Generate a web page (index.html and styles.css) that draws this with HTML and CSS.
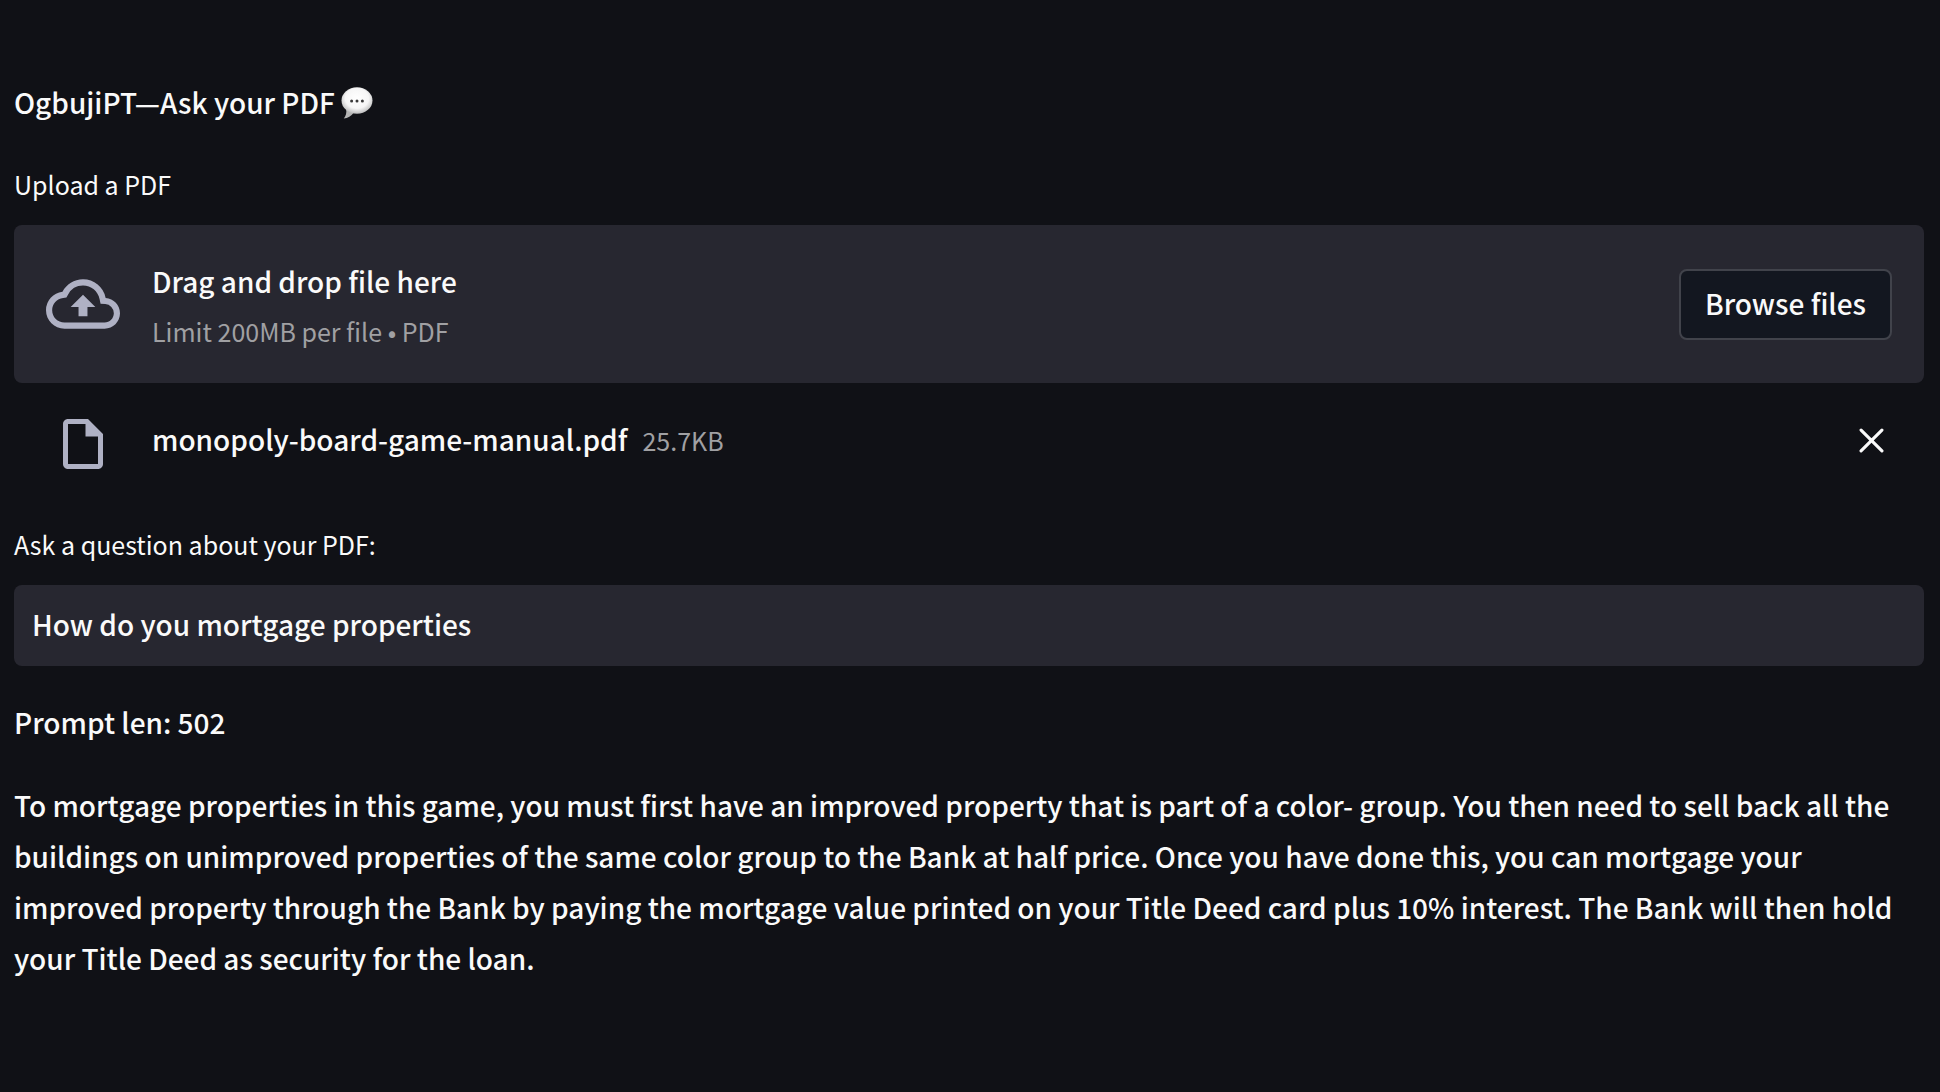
FILE: index.html
```html
<!DOCTYPE html>
<html lang="en">
<head>
    <meta charset="UTF-8">
    <meta name="viewport" content="width=device-width, initial-scale=1.0">
    <title>Ask your PDF</title>
    <link rel="stylesheet" href="styles.css">
</head>
<body>

<main class="page">
    <!-- Page title -->
    <p class="title">OgbujiPT—Ask your PDF
        <svg class="bubble" viewBox="0 0 32 32" role="img" aria-label="Speech bubble">
            <defs>
                <radialGradient id="shine" cx="50%" cy="42%" r="58%">
                    <stop offset="0" stop-color="#ffffff"/>
                    <stop offset="0.65" stop-color="#f6f6f6"/>
                    <stop offset="1" stop-color="#bdbdbd"/>
                </radialGradient>
            </defs>
            <path fill="#b4b4b4" d="M5 22c1 4-.2 7-2.2 9.4 4-.2 7.600-2.400 9.700-5.400z"/>
            <ellipse cx="16" cy="13.500" rx="15.500" ry="13.200" fill="url(#shine)"/>
            <circle cx="10.600" cy="14" r="1.500" fill="#3a3a3a"/>
            <circle cx="16" cy="14" r="1.500" fill="#3a3a3a"/>
            <circle cx="21.400" cy="14" r="1.500" fill="#3a3a3a"/>
        </svg>
    </p>

    <!-- File uploader -->
    <section class="uploader">
        <span class="label" id="upload-label">Upload a PDF</span>
        <div class="dropzone">
            <svg class="cloud-icon" viewBox="0 0 24 24" aria-hidden="true">
                <path d="M19.350 10.040A7.490 7.490 0 0012 4C9.110 4 6.600 5.640 5.350 8.040A5.994 5.994 0 000 14c0 3.310 2.690 6 6 6h13c2.760 0 5-2.240 5-5 0-2.640-2.050-4.780-4.650-4.960zM19 18H6c-2.210 0-4-1.790-4-4 0-2.050 1.530-3.760 3.560-3.970l1.070-.110.500-.950A5.469 5.469 0 0112 6c2.620 0 4.880 1.860 5.390 4.430l.300 1.500 1.530.110A2.980 2.980 0 0122 15c0 1.650-1.350 3-3 3zM8 13h2.550v3h2.900v-3H16l-4-4z"/>
            </svg>
            <div class="drop-text">
                <span>Drag and drop file here</span>
                <small>Limit 200MB per file • PDF</small>
            </div>
            <button type="button" class="browse-btn" aria-describedby="upload-label">Browse files</button>
        </div>

        <div class="file-row">
            <div class="file-icon">
                <svg viewBox="0 0 24 24" aria-hidden="true">
                    <path d="M14 2H6c-1.100 0-1.990.900-1.990 2L4 20c0 1.100.890 2 1.990 2H18c1.100 0 2-.900 2-2V8l-6-6zM6 20V4h7v5h5v11H6z"/>
                </svg>
            </div>
            <div class="file-info">
                <span>monopoly-board-game-manual.pdf</span>
                <small>25.7KB</small>
            </div>
            <button type="button" class="remove-btn" aria-label="Remove file">
                <svg viewBox="0 0 24 24" aria-hidden="true">
                    <path d="M2 2l20 20M22 2L2 22"/>
                </svg>
            </button>
        </div>
    </section>

    <!-- Question -->
    <form class="question">
        <label class="label" for="question">Ask a question about your PDF:</label>
        <input type="text" id="question" value="How do you mortgage properties">
    </form>

    <!-- Answer -->
    <p>Prompt len: 502</p>
    <p>To mortgage properties in this game, you must first have an improved property that is part of a color- group. You then need to sell back all the buildings on unimproved properties of the same color group to the Bank at half price. Once you have done this, you can mortgage your improved property through the Bank by paying the mortgage value printed on your Title Deed card plus 10% interest. The Bank will then hold your Title Deed as security for the loan.</p>
</main>

</body>
</html>
```
FILE: styles.css
```css
* {
    box-sizing: border-box;
}

body {
    margin: 0;
    background-color: #101116;
    color: #fafafa;
    font-family: "Source Sans Pro", "Noto Sans CJK JP", sans-serif;
    font-size: 28px;
    font-weight: 500;
    line-height: 51px;
}

button, input {
    font: inherit;
    color: inherit;
}

.page {
    padding: 77px 16px 80px 14px;
}

p {
    margin: 0 0 32px;
}

.title {
    display: flex;
    align-items: center;
    gap: 6px;
    margin-bottom: 34px;
}

.bubble {
    width: 32px;
    height: 32px;
}

.label {
    display: block;
    margin-bottom: 19px;
    font-size: 25px;
    font-weight: 400;
    line-height: 44px;
}

small {
    font-size: 25px;
    font-weight: 400;
    line-height: 44px;
    color: #a0a0a3;
}

/* Uploader */
.dropzone {
    display: flex;
    align-items: center;
    min-height: 158px;
    padding: 16px 32px;
    background-color: #272730;
    border-radius: 8px;
}

.cloud-icon {
    width: 74px;
    height: 74px;
    margin-right: 32px;
    fill: #afb1c4;
}

.drop-text {
    display: flex;
    flex-direction: column;
    gap: 2px;
}

.browse-btn {
    margin-left: auto;
    height: 71px;
    padding: 0 24px 2px;
    background-color: #131720;
    border: 2px solid #41434b;
    border-radius: 8px;
    cursor: pointer;
}

.file-row {
    display: flex;
    align-items: flex-start;
    margin-top: 31px;
    padding: 0 40px 0 32px;
}

.file-icon {
    display: flex;
    justify-content: center;
    width: 74px;
    margin-right: 32px;
}

.file-icon svg {
    width: 60px;
    height: 60px;
    fill: #afb1c4;
}

.file-info {
    display: flex;
    align-items: baseline;
    gap: 15px;
}

.remove-btn {
    display: flex;
    align-items: center;
    height: 52px;
    margin-left: auto;
    padding: 0;
    background: none;
    border: none;
    cursor: pointer;
}

.remove-btn svg {
    width: 25px;
    height: 25px;
    fill: none;
    stroke: #fafafa;
    stroke-width: 3;
    stroke-linecap: round;
}

/* Question */
.question {
    margin: 48px 0 31px;
}

.question input {
    display: block;
    width: 100%;
    height: 81px;
    padding: 0 18px 4px;
    background-color: #272730;
    border: none;
    border-radius: 8px;
    outline: none;
}
```
